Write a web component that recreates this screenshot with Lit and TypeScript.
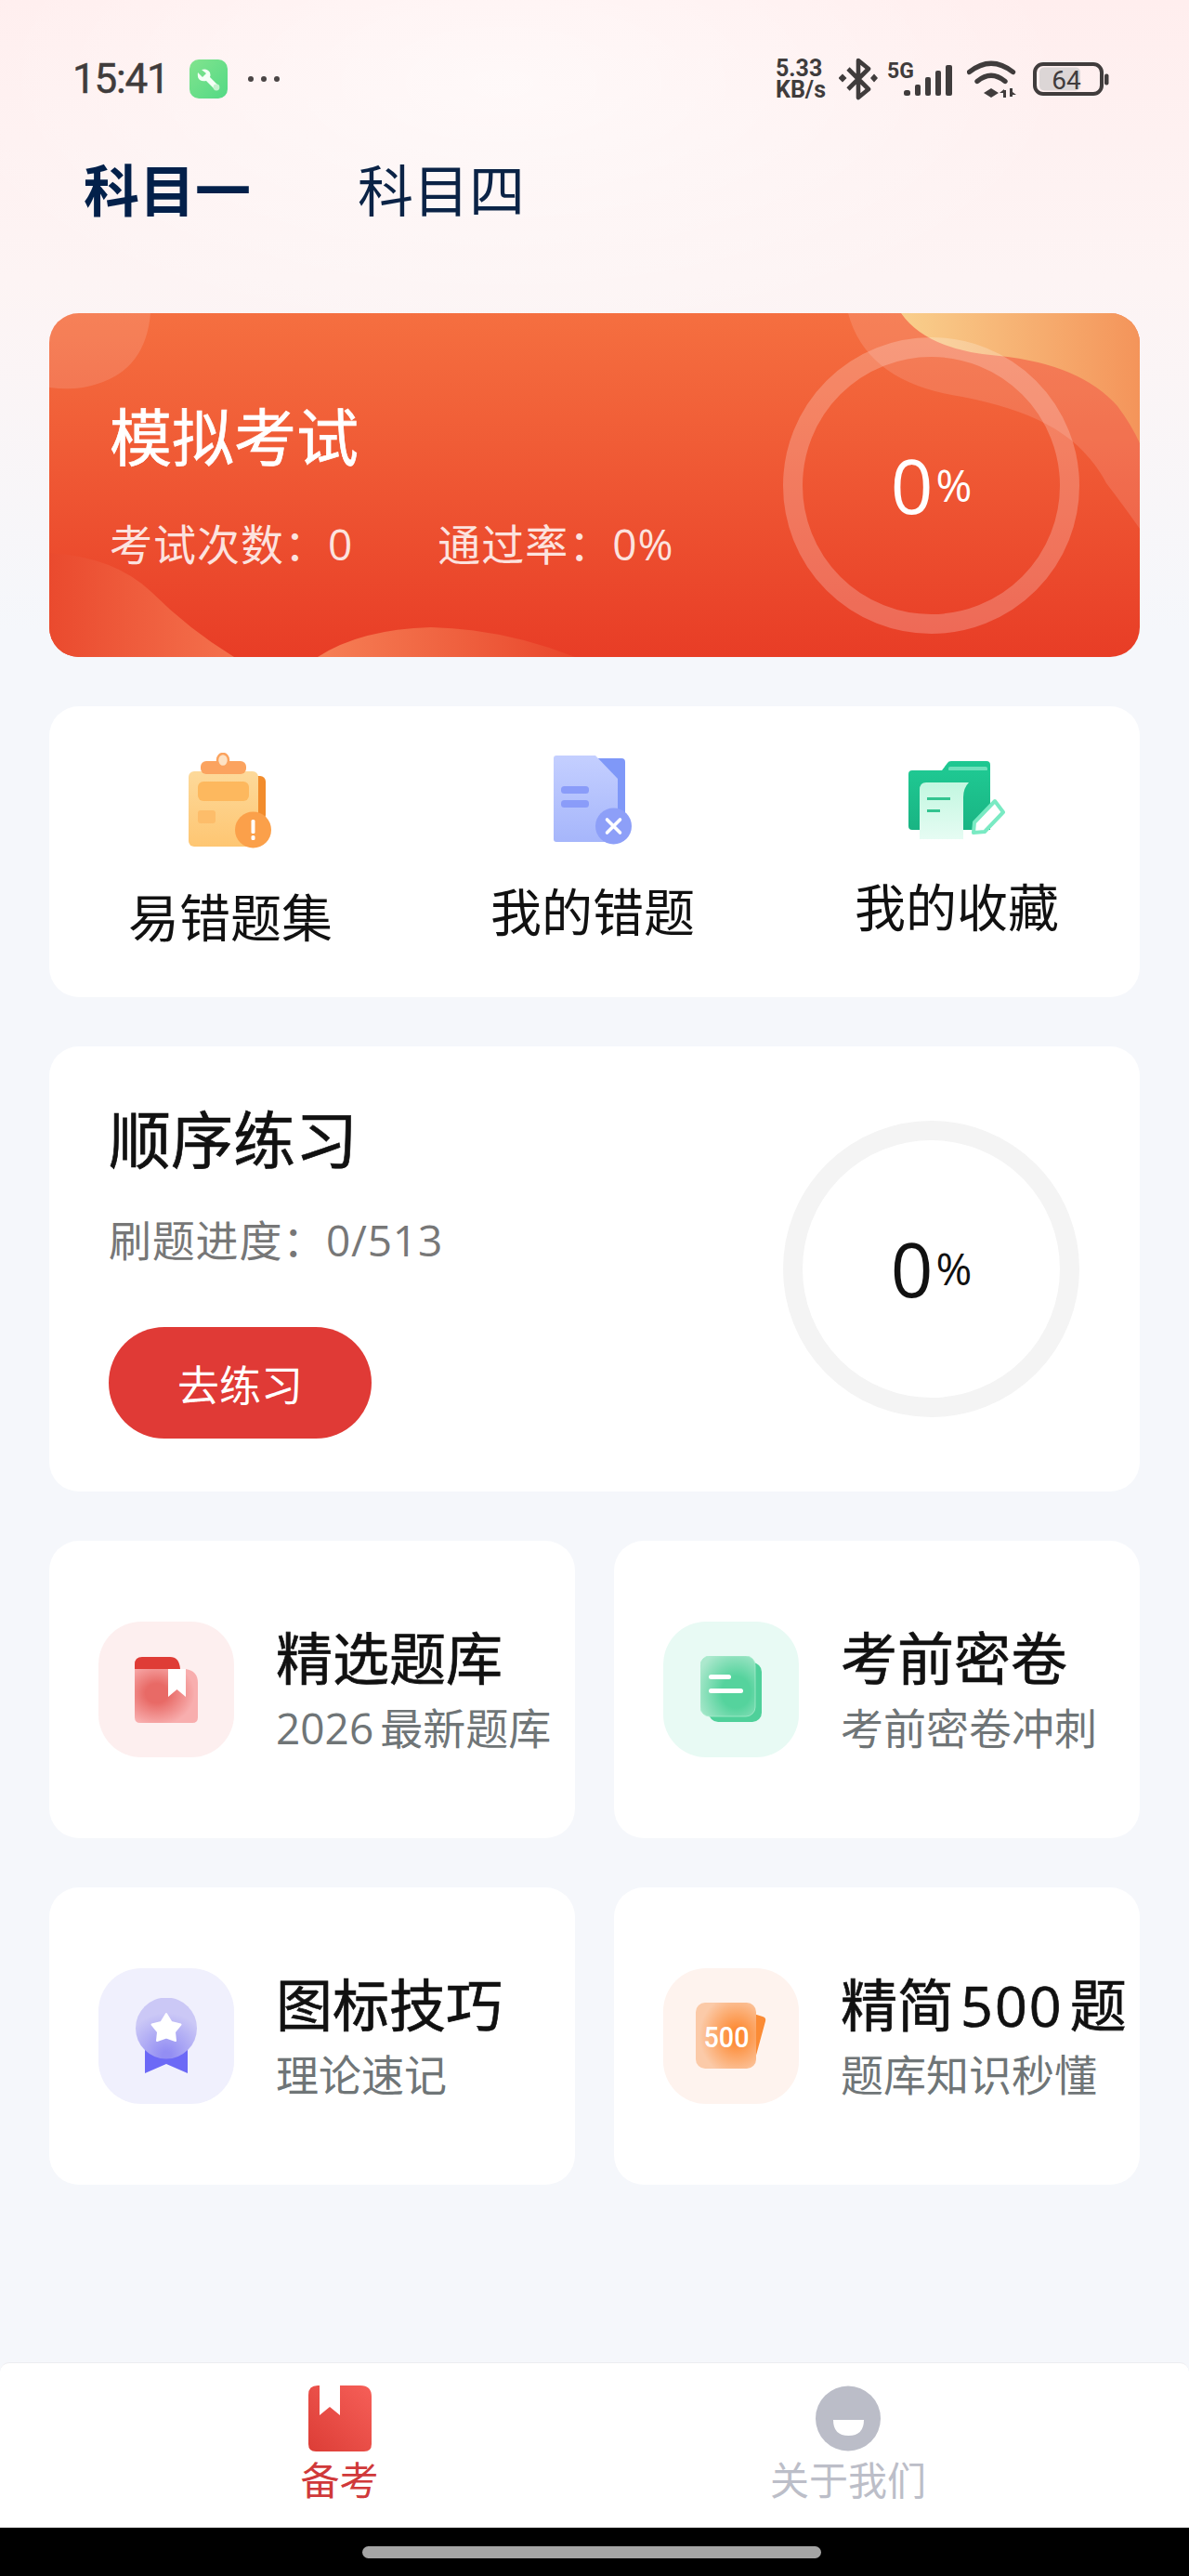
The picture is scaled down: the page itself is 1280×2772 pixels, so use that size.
import { LitElement, html, css, svg } from 'lit';
import { customElement } from 'lit/decorators.js';

// Icons use page coordinates as their viewBox, it makes them easy to compare with the reference.
const wrench = html`<svg width="41" height="42" viewBox="203 64 41 42">
  <defs><linearGradient id="wr" x1="0" y1="0" x2="1" y2="1"><stop offset="0" stop-color="#82e48e" /><stop offset="1" stop-color="#52d985" /></linearGradient></defs>
  <rect x="203" y="64" width="41" height="42" rx="10" fill="url(#wr)" />
  <path d="M212 78 L217 83 L221 79 L216 75 Q222 73 225 78 Q226 81 225 83 L234 92 L230 96 L221 87 Q217 88 214 86 Q211 83 212 78 Z" fill="#f4fff6" />
  <circle cx="232" cy="94" r="3.4" fill="#c4f2cf" />
</svg>`;

const dots = html`<svg width="35" height="8" viewBox="265 80 35 8" fill="#4a4545">
  <circle cx="268" cy="84" r="3" /><circle cx="282" cy="84" r="3" /><circle cx="296" cy="84" r="3" />
</svg>`;

const bluetooth = html`<svg width="42" height="46" viewBox="904 62 42 46">
  <path d="M914 74 L936 96 L925 105 V65 L936 74 L914 96" fill="none" stroke="#403c3c" stroke-width="4.6" stroke-linejoin="round" />
  <path d="M908 79.5 L912.5 84 L908 88.5 L903.5 84 Z M942 79.5 L946 84 L942 88.5 L938 84 Z" fill="#403c3c" />
</svg>`;

const signal = html`<svg width="70" height="60" viewBox="956 54 70 60">
  <text x="956" y="82.5" font-family="Roboto" font-weight="700" font-size="23" fill="#403c3c">5G</text>
  <g fill="#403c3c">
    <rect x="974" y="96" width="7" height="6" rx="2.5" />
    <rect x="986" y="90" width="6" height="12" rx="2" />
    <rect x="997" y="82" width="6" height="20" rx="2" />
    <rect x="1008" y="75" width="6" height="27" rx="2" />
    <rect x="1019" y="69" width="7" height="33" rx="2" />
  </g>
</svg>`;

const wifi = html`<svg width="54" height="40" viewBox="1042 66 54 40">
  <g fill="none" stroke="#403c3c" stroke-width="5.4" stroke-linecap="round">
    <path d="M1044.5 78.5 Q1068 60 1091.5 78.5" />
    <path d="M1053 88.5 Q1068 76 1083 88.5" />
  </g>
  <path d="M1068 96 L1076 101 L1068 106 L1060 101 Z M1081 98 h3 v8 h-3 Z M1088 96 h3 v9 h-3 Z M1077 101 l5 -4 v4 Z M1091 100 l4 3 h-4 Z" fill="#403c3c" />
</svg>`;

const battery = html`<svg width="82" height="36" viewBox="1112 66.5 82 36">
  <rect x="1119" y="72" width="44" height="25" rx="5" fill="#dcd6d6" />
  <rect x="1114" y="68.5" width="72" height="32" rx="9" fill="none" stroke="#403c3c" stroke-width="4" />
  <rect x="1189" y="79" width="4.5" height="12" rx="2" fill="#403c3c" />
  <text x="1148" y="95.5" text-anchor="middle" font-family="Roboto" font-size="28" fill="#403c3c">64</text>
</svg>`;

const clipboard = html`<svg width="90" height="103" viewBox="204 810 90 103">
  <defs>
    <linearGradient id="cb" x1="0" y1="0" x2="0" y2="1"><stop offset="0" stop-color="#fdd99a" /><stop offset="1" stop-color="#fec672" /></linearGradient>
  </defs>
  <rect x="272" y="835" width="15" height="48" rx="6" fill="#f28c2c" />
  <rect x="204" y="830" width="75" height="81" rx="6" fill="url(#cb)" />
  <rect x="217" y="819" width="49" height="14" rx="6" fill="#fba35f" />
  <ellipse cx="241" cy="818" rx="6" ry="7" fill="#fde2c4" stroke="#fba35f" stroke-width="2.5" />
  <rect x="214" y="841" width="55" height="21" rx="6" fill="#fdb85e" />
  <rect x="214" y="872" width="19" height="14" rx="3" fill="#fdbd6a" />
  <circle cx="273.5" cy="893" r="19.5" fill="#fba04a" />
  <rect x="271.5" y="882" width="4" height="15" rx="1.5" fill="#fff" />
  <rect x="271.5" y="899" width="4" height="5" rx="1.5" fill="#fff" />
</svg>`;

const wrongDoc = html`<svg width="84" height="96" viewBox="598 813 84 96">
  <defs>
    <linearGradient id="wd" x1="0" y1="0" x2="0" y2="1"><stop offset="0" stop-color="#c4cfff" /><stop offset="1" stop-color="#a6b6fb" /></linearGradient>
  </defs>
  <path d="M643 816 H671 Q675 816 675 820 V880 H660 Z" fill="#7f98f8" />
  <path d="M601 813 H643 L667 838 V906 H601 Q598 906 598 903 V816 Q598 813 601 813 Z" fill="url(#wd)" />
  <rect x="606" y="846" width="30" height="8" rx="3.5" fill="#8a9cf9" />
  <rect x="606" y="861" width="30" height="8" rx="3.5" fill="#8a9cf9" />
  <circle cx="662.5" cy="889" r="19.5" fill="#8d9ff8" />
  <path d="M655.5 882 L669.5 896 M669.5 882 L655.5 896" stroke="#fff" stroke-width="3.6" stroke-linecap="round" />
</svg>`;

const folder = html`<svg width="104" height="85" viewBox="978 819 104 85">
  <defs>
    <linearGradient id="fo" x1="0" y1="0" x2="0" y2="1"><stop offset="0" stop-color="#1fc892" /><stop offset="1" stop-color="#19b483" /></linearGradient>
    <linearGradient id="fp" x1="0" y1="0" x2="0" y2="1"><stop offset="0" stop-color="#c2f7e0" /><stop offset="1" stop-color="#e6fcf3" /></linearGradient>
  </defs>
  <path d="M1014 829 L1020 821 Q1021 819 1024 819 H1062 Q1066 819 1066 823 V893 H1014 Z" fill="url(#fo)" />
  <rect x="1021" y="825" width="42" height="5" rx="2" fill="#6fe0bb" />
  <path d="M982 829 H1066 V893 H982 Q978 893 978 889 V833 Q978 829 982 829 Z" fill="url(#fo)" />
  <path d="M997 842 H1043 Q1037 848 1037 858 V903 H990 V850 Q990 842 997 842 Z" fill="url(#fp)" />
  <rect x="998" y="858" width="25" height="3" fill="#33c490" />
  <rect x="998" y="871" width="14" height="3" fill="#33c490" />
  <path d="M1071 862 L1080 874 L1060 895 L1048 896 L1049 885 Z" fill="#fff" stroke="#7aeac3" stroke-width="4" stroke-linejoin="round" />
</svg>`;

const bookIcon = html`<svg width="68" height="71" viewBox="145 1783 68 71">
  <defs>
    <radialGradient id="bk" cx="0.35" cy="0.45" r="0.6"><stop offset="0.3" stop-color="#e86a66" /><stop offset="1" stop-color="#f8aeae" /></radialGradient>
  </defs>
  <path d="M145 1796 H200 Q213 1798 213 1811 V1848 Q213 1854 207 1854 H151 Q145 1854 145 1848 Z" fill="url(#bk)" />
  <path d="M145 1796 V1791 Q145 1783 153 1783 H183 Q193 1783 194 1796 Z" fill="#df3c36" />
  <path d="M181 1796 H200 V1826 L190.5 1818 L181 1826 Z" fill="#fff" />
</svg>`;

const paperIcon = html`<svg width="67" height="72" viewBox="754 1783 67 72">
  <defs>
    <radialGradient id="pp" cx="0.65" cy="0.6" r="0.75"><stop offset="0.35" stop-color="#55d39d" /><stop offset="1" stop-color="#ace8cd" /></radialGradient>
  </defs>
  <rect x="763" y="1790" width="57" height="64" rx="10" fill="#4fd09a" />
  <rect x="754" y="1783" width="59" height="65" rx="10" fill="url(#pp)" stroke="#a5eccb" stroke-width="0.8" />
  <rect x="763" y="1803" width="24" height="5" rx="2.5" fill="#fff" />
  <rect x="763" y="1818" width="37" height="5" rx="2.5" fill="#fff" />
</svg>`;

const medalIcon = html`<svg width="68" height="82" viewBox="145 2151 68 82">
  <defs>
    <radialGradient id="md" cx="0.5" cy="0.95" r="0.7"><stop offset="0.1" stop-color="#938ef3" /><stop offset="1" stop-color="#cbc8f6" /></radialGradient>
  </defs>
  <path d="M156 2200 H202 V2232 L179 2222 L156 2232 Z" fill="#6c69f6" />
  <circle cx="179" cy="2183.5" r="33" fill="url(#md)" />
  <path d="M179 2168 L184.5 2177 L194.5 2179.5 L188 2187.5 L189 2197 L179 2193.5 L169 2197 L170 2187.5 L163.5 2179.5 L173.5 2177 Z" fill="#fff" stroke="#fff" stroke-width="2" stroke-linejoin="round" />
</svg>`;

const cardsIcon = html`<svg width="76" height="72" viewBox="754 2156 76 72">
  <defs>
    <radialGradient id="cd" cx="0.68" cy="0.5" r="0.62"><stop offset="0.15" stop-color="#fd8a33" /><stop offset="1" stop-color="#fbcaa8" /></radialGradient>
  </defs>
  <path d="M810 2166 L826 2171 Q830 2172 829 2176 L817 2220 H810 Z" fill="#fb8b35" />
  <rect x="754" y="2156" width="65" height="71" rx="10" fill="url(#cd)" />
  <text x="787" y="2204" text-anchor="middle" font-family="Roboto" font-weight="500" font-size="31" textLength="49" lengthAdjust="spacingAndGlyphs" fill="#fff">500</text>
</svg>`;

const navBook = html`<svg width="68" height="71" viewBox="331 2566 68 71">
  <defs>
    <linearGradient id="nb" x1="0" y1="1" x2="1" y2="0"><stop offset="0" stop-color="#dc3d36" /><stop offset="1" stop-color="#f65f58" /></linearGradient>
  </defs>
  <path d="M341 2566 H387 Q399 2566 399 2578 V2629 Q399 2637 391 2637 H339 Q331 2637 331 2629 V2576 Q331 2566 341 2566 Z" fill="url(#nb)" />
  <path d="M343 2566 H365 V2598 L354 2589 L343 2598 Z" fill="#fff" />
</svg>`;

const navAbout = html`<svg width="70" height="71" viewBox="879 2566 70 71">
  <circle cx="914" cy="2601.5" r="35" fill="#bbbdc8" />
  <path d="M898 2603 H931 Q931 2620 914.5 2620 Q898 2620 898 2603 Z" fill="#fff" />
</svg>`;

// shapes behind the hero text, in card coordinates
const heroBlobs = svg`
  <defs>
    <linearGradient id="hy" x1="0" y1="0" x2="1" y2="0"><stop offset="0" stop-color="#f9cf8c" /><stop offset="1" stop-color="#f4945a" /></linearGradient>
    <linearGradient id="hbl" x1="0" y1="0" x2="1" y2="0"><stop offset="0" stop-color="#ea4a2e" /><stop offset="1" stop-color="#f4714d" /></linearGradient>
    <linearGradient id="hbc" x1="0" y1="0" x2="1" y2="0"><stop offset="0" stop-color="#f67f55" /><stop offset="1" stop-color="#e9472c" /></linearGradient>
  </defs>
  <path d="M0 0 H109 Q104 60 52 76 Q30 84 0 80 Z" fill="#fff" opacity="0.13" />
  <path d="M860 0 Q880 75 983 90 C1060 105 1110 130 1138 183 Q1155 205 1174 232 V0 Z" fill="#fff" opacity="0.13" />
  <path d="M917 0 Q945 40 1023 46 Q1110 55 1150 100 Q1165 120 1174 140 V0 Z" fill="url(#hy)" />
  <path d="M0 258 Q70 262 110 300 Q150 340 199 370 H0 Z" fill="url(#hbl)" />
  <path d="M289 370 Q335 340 411 338 Q490 340 566 370 Z" fill="url(#hbc)" />
`;

const tiles = [
  { title: html`精选题库`, sub: html`<span class="num">2026</span>最新题库`, bg: '#fdefef', icon: bookIcon },
  { title: html`考前密卷`, sub: html`考前密卷冲刺`, bg: '#e8faf4', icon: paperIcon },
  { title: html`图标技巧`, sub: html`理论速记`, bg: '#f0f0fd', icon: medalIcon },
  { title: html`精简<span class="num">500</span>题`, sub: html`题库知识秒懂`, bg: '#fef3ee', icon: cardsIcon },
];

@customElement('app-root')
export class AppRoot extends LitElement {
  render() {
    return html`
      <div class="screen">
        <div class="status">
          <div class="status-left">
            <span class="time">15:41</span>
            ${wrench} ${dots}
          </div>
          <div class="status-right">
            <div class="speed"><span>5.33</span><span>KB/s</span></div>
            ${bluetooth} ${signal} ${wifi} ${battery}
          </div>
        </div>

        <div class="tabs">
          <span class="tab active">科目一</span>
          <span class="tab">科目四</span>
        </div>

        <main class="content">
          <section class="hero">
            <svg class="blobs" viewBox="0 0 1174 370" width="1174" height="370">${heroBlobs}</svg>
            <div class="hero-text">
              <div class="hero-title">模拟考试</div>
              <div class="hero-sub"><span>考试次数：0</span><span>通过率：0%</span></div>
            </div>
            <div class="ring hero-ring"><b>0</b><i>%</i></div>
          </section>

          <section class="shortcuts">
            <div class="shortcut s1">${clipboard}<span>易错题集</span></div>
            <div class="shortcut s2">${wrongDoc}<span>我的错题</span></div>
            <div class="shortcut s3">${folder}<span>我的收藏</span></div>
          </section>

          <section class="practice">
            <div class="practice-text">
              <div class="practice-title">顺序练习</div>
              <div class="practice-sub">刷题进度：0/513</div>
              <div class="go">去练习</div>
            </div>
            <div class="ring plain-ring"><b>0</b><i>%</i></div>
          </section>

          <section class="grid">
            ${tiles.map(
              (t) => html`<div class="tile">
                <div class="tile-icon" style="background:${t.bg}">${t.icon}</div>
                <div class="tile-text">
                  <div class="tile-title">${t.title}</div>
                  <div class="tile-sub">${t.sub}</div>
                </div>
              </div>`
            )}
          </section>
        </main>

        <nav class="nav">
          <div class="nav-item on">${navBook}<span>备考</span></div>
          <div class="nav-item">${navAbout}<span>关于我们</span></div>
        </nav>
        <div class="gesture"><div class="bar"></div></div>
      </div>
    `;
  }

  static styles = css`
    :host {
      display: block;
      width: 1280px;
      height: 2772px;
      font-family: 'Open Sans', 'Noto Sans CJK SC', sans-serif;
    }

    svg {
      display: block;
      flex: none;
    }

    .screen {
      display: flex;
      flex-direction: column;
      height: 2772px;
      overflow: hidden;
      background:
        radial-gradient(ellipse 620px 280px at 540px 90px, rgba(255, 255, 255, 0.6), rgba(255, 255, 255, 0)),
        linear-gradient(180deg, #ffeeee 0, #fdf4f4 300px, #f5f7fb 680px);
    }

    .status {
      display: flex;
      justify-content: space-between;
      align-items: center;
      height: 46px;
      margin-top: 62px;
      padding: 0 86px 0 78px;
    }

    .status-left {
      display: flex;
      align-items: center;
      gap: 22px;
    }

    .time {
      font-family: Roboto, sans-serif;
      font-size: 44px;
      line-height: 46px;
      letter-spacing: -1.2px;
      -webkit-text-stroke: 0.5px #403c3c;
      color: #403c3c;
    }

    .status-right {
      display: flex;
      align-items: center;
    }

    .speed {
      display: flex;
      flex-direction: column;
      width: 68px;
      font-family: Roboto, sans-serif;
      font-size: 25px;
      font-weight: 700;
      line-height: 23px;
      color: #403c3c;
    }

    .status-right svg:nth-of-type(2) {
      margin-left: 10px;
    }

    .status-right svg:nth-of-type(3) {
      margin-left: 16px;
    }

    .status-right svg:nth-of-type(4) {
      margin-left: 17px;
    }

    .tabs {
      display: flex;
      gap: 115px;
      margin-top: 67px;
      padding-left: 90px;
      height: 60px;
    }

    .tab {
      font-size: 60px;
      line-height: 60px;
      color: #0b2346;
    }

    .tab.active {
      font-weight: 700;
      color: #03204a;
    }

    .content {
      display: flex;
      flex-direction: column;
      gap: 53px;
      margin-top: 102px;
      padding: 0 53px;
    }

    .hero {
      position: relative;
      display: flex;
      justify-content: space-between;
      align-items: center;
      height: 370px;
      padding: 0 65px 0 65px;
      box-sizing: border-box;
      border-radius: 32px;
      overflow: hidden;
      color: #fff;
      background: linear-gradient(180deg, #f56f40, #e83d26);
    }

    .blobs {
      position: absolute;
      left: 0;
      top: 0;
    }

    .hero-text {
      position: relative;
      display: flex;
      flex-direction: column;
      gap: 58px;
    }

    .hero-title {
      font-size: 67px;
      line-height: 68px;
      -webkit-text-stroke: 0.7px #fff;
    }

    .hero-sub {
      display: flex;
      gap: 91px;
      font-size: 46px;
      line-height: 46px;
      letter-spacing: 1px;
      color: rgba(255, 255, 255, 0.85);
    }

    .ring {
      position: relative;
      display: flex;
      justify-content: center;
      align-items: center;
      gap: 3px;
      width: 319px;
      height: 319px;
      box-sizing: border-box;
      border-radius: 50%;
      border: 21px solid #f4f4f4;
    }

    .hero-ring {
      border-color: rgba(255, 255, 255, 0.22);
    }

    .ring b {
      font-size: 80px;
      line-height: 80px;
      font-weight: 400;
    }

    .ring i {
      font-size: 47px;
      line-height: 47px;
      font-style: normal;
    }

    .shortcuts {
      display: grid;
      grid-template-columns: 390px 390px 394px;
      height: 313px;
      border-radius: 32px;
      background: #fff;
    }

    .shortcut {
      display: flex;
      flex-direction: column;
      align-items: center;
      font-size: 55px;
      line-height: 54px;
      color: #111;
    }

    .s1 {
      padding-top: 50px;
      gap: 47px;
    }

    .s2 {
      padding-top: 53px;
      gap: 45px;
    }

    .s3 {
      padding-top: 59px;
      gap: 45px;
    }

    .practice {
      display: flex;
      justify-content: space-between;
      align-items: center;
      padding: 56px 65px 57px 64px;
      border-radius: 32px;
      background: #fff;
      color: #111;
    }

    .practice-text {
      margin-top: 11px;
    }

    .practice-title {
      font-size: 67px;
      line-height: 66px;
      -webkit-text-stroke: 0.7px #111;
    }

    .practice-sub {
      margin-top: 52px;
      font-size: 46px;
      line-height: 46px;
      letter-spacing: 0.8px;
      color: #777;
    }

    .go {
      display: flex;
      justify-content: center;
      align-items: center;
      width: 283px;
      height: 120px;
      margin-top: 71px;
      border-radius: 60px;
      font-size: 45px;
      color: #fff;
      background: #e03a36;
    }

    .grid {
      display: grid;
      grid-template-columns: 566px 566px;
      gap: 53px 42px;
    }

    .tile {
      display: flex;
      align-items: center;
      gap: 45px;
      height: 320px;
      padding-left: 53px;
      box-sizing: border-box;
      border-radius: 32px;
      background: #fff;
    }

    .tile-icon {
      display: flex;
      flex: none;
      justify-content: center;
      align-items: center;
      width: 146px;
      height: 146px;
      border-radius: 46px;
    }

    .tile-text {
      margin-top: 8px;
      white-space: nowrap;
    }

    .tile-title {
      font-size: 61px;
      line-height: 74px;
      -webkit-text-stroke: 0.7px #111;
      color: #111;
    }

    .tile-sub {
      font-size: 46px;
      line-height: 74px;
      color: #6f7577;
    }

    .num {
      margin: 0 7px;
      letter-spacing: 2px;
    }

    .tile-sub .num {
      margin: 0 7px 0 0;
      letter-spacing: 0;
    }

    .nav {
      display: grid;
      grid-template-columns: 549px 546px;
      height: 178px;
      margin-top: auto;
      box-sizing: border-box;
      padding: 24px 0 0 91px;
      border-radius: 10px 10px 0 0;
      border-top: 1px solid #ececf0;
      background: #fff;
    }

    .nav-item {
      display: flex;
      flex-direction: column;
      align-items: center;
      gap: 10px;
      font-size: 42px;
      line-height: 42px;
      color: #bcbec8;
    }

    .nav-item.on {
      color: #d0393a;
    }

    .gesture {
      display: flex;
      flex: none;
      justify-content: center;
      height: 52px;
      padding: 20px 6px 0 0;
      box-sizing: border-box;
      background: #000;
    }

    .bar {
      width: 494px;
      height: 13px;
      border-radius: 7px;
      background: #a5a5a5;
    }
  `;
}
